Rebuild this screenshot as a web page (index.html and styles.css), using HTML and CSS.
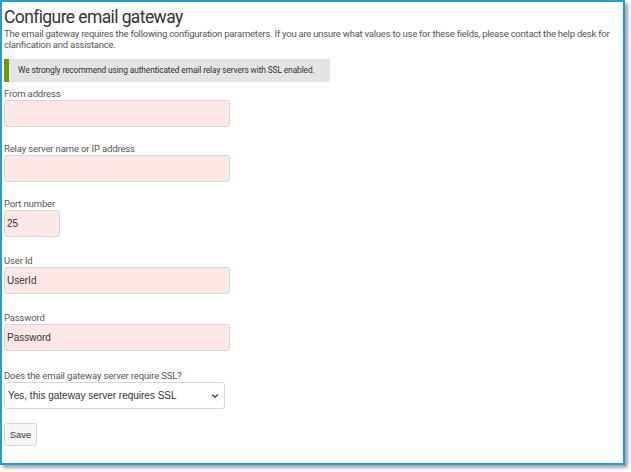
FILE: index.html
```html
<!DOCTYPE html>
<html>
<head>
<meta charset="utf-8">
<link rel="stylesheet" href="styles.css">
</head>
<body>
<div class="frame">
  <h1 class="title">Configure email gateway</h1>
  <p class="desc">The email gateway requires the following configuration parameters. If you are unsure what values to use for these fields, please contact the help desk for clarification and assistance.</p>
  <div class="alert">We strongly recommend using authenticated email relay servers with SSL enabled.</div>
  <form class="form">
    <div class="group">
      <label class="label">From address</label>
      <input class="input wide" type="text" value="">
    </div>
    <div class="group">
      <label class="label">Relay server name or IP address</label>
      <input class="input wide" type="text" value="">
    </div>
    <div class="group loose">
      <label class="label">Port number</label>
      <input class="input short" type="text" value="25">
    </div>
    <div class="group loose">
      <label class="label">User Id</label>
      <input class="input wide" type="text" value="UserId">
    </div>
    <div class="group looser">
      <label class="label">Password</label>
      <input class="input wide" type="text" value="Password">
    </div>
    <div class="group last">
      <label class="label">Does the email gateway server require SSL?</label>
      <div class="select">
        <span>Yes, this gateway server requires SSL</span>
        <svg width="8" height="6" viewBox="0 0 8 6"><path d="M1.2 1.5 L4 4.3 L6.8 1.5" fill="none" stroke="#444" stroke-width="1.3"/></svg>
      </div>
    </div>
    <button class="btn" type="button">Save</button>
  </form>
</div>
</body>
</html>
```
FILE: styles.css
```css
* { box-sizing: border-box; }
html, body { margin: 0; padding: 0; background: #fff; }
body { width: 631px; height: 472px; }
.frame {
  width: 625px;
  height: 465px;
  border: 2px solid #1f9ddc;
  box-shadow: 3px 3px 3px rgba(0,0,0,0.35);
  padding: 5px 2px 0 2px;
  font-family: Roboto, "Liberation Sans", sans-serif;
  color: #555;
}
.title {
  margin: 0;
  font-family: Roboto, sans-serif;
  font-weight: 400;
  font-size: 17.5px;
  letter-spacing: -0.6px;
  line-height: 20px;
  color: #333;
}
.desc {
  margin: 1px 0 0 0;
  font-size: 9.5px;
  letter-spacing: -0.24px;
  line-height: 11px;
  color: #555;
}
.alert {
  margin-top: 9px;
  width: 326px;
  height: 23px;
  background: #e4e4e4;
  border-left: 5px solid #6b9a05;
  font-size: 8.4px;
  letter-spacing: -0.12px;
  line-height: 23px;
  padding-left: 9px;
  white-space: nowrap;
  color: #333;
}
.form { margin-top: 5px; display: flex; flex-direction: column; }
.group { display: flex; flex-direction: column; margin-bottom: 15px; }
.group.loose { margin-bottom: 17px; }
.group.looser { margin-bottom: 18px; }
.group.last { margin-bottom: 14px; }
.label { font-size: 9.5px; letter-spacing: -0.15px; line-height: 13px; color: #555; }
.input {
  height: 27px;
  background: #fde8e5;
  border: 1px solid #d6d6d6;
  border-radius: 3px;
  font-family: "Liberation Sans", Arial, sans-serif;
  font-size: 10px;
  color: #333;
  padding: 0 2px;
  outline: none;
}
.wide { width: 226px; }
.short { width: 56px; }
.select {
  width: 221px;
  height: 27px;
  border: 1px solid #d6d6d6;
  border-radius: 3px;
  display: flex;
  align-items: center;
  justify-content: space-between;
  padding: 0 5px 0 3px;
  font-family: "Liberation Sans", Arial, sans-serif;
  font-size: 10px;
  color: #333;
}
.btn {
  align-self: flex-start;
  width: 33px;
  height: 23px;
  background: #f7f7f7;
  border: 1px solid #d6d6d6;
  border-radius: 3px;
  font-family: "Liberation Sans", Arial, sans-serif;
  font-size: 9.5px;
  color: #333;
  padding: 0;
}
```
